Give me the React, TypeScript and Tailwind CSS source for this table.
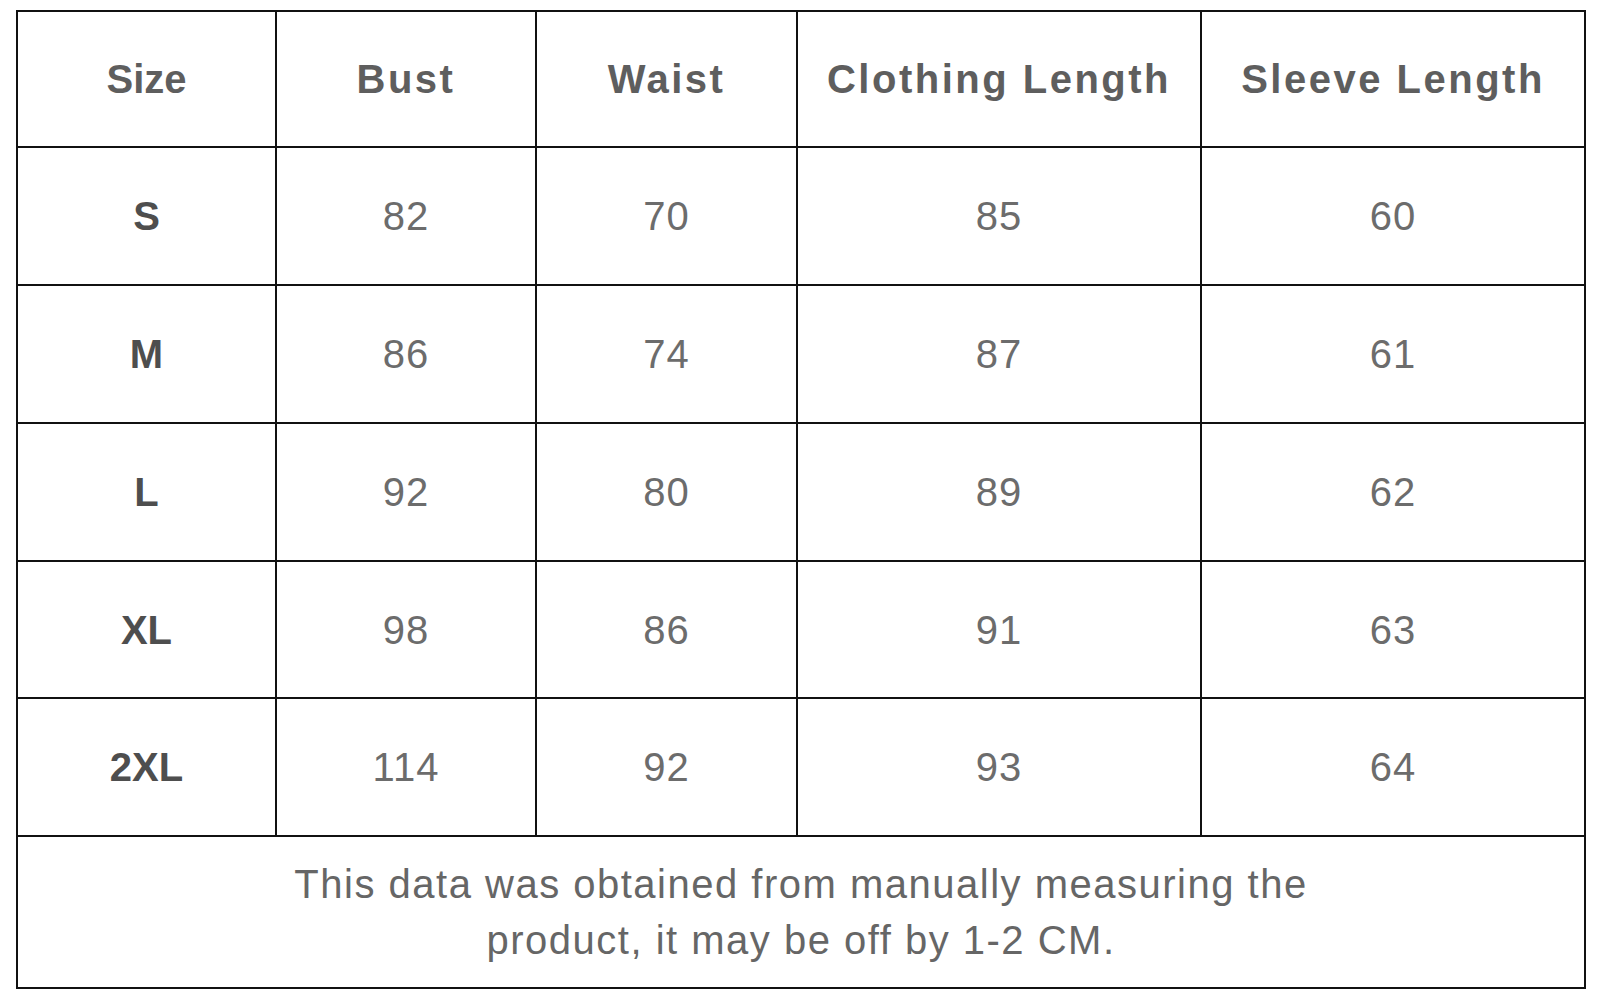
import React from "react";

const headers = ["Size", "Bust", "Waist", "Clothing Length", "Sleeve Length"];
const rows: [string, string, string, string, string][] = [
  ["S", "82", "70", "85", "60"],
  ["M", "86", "74", "87", "61"],
  ["L", "92", "80", "89", "62"],
  ["XL", "98", "86", "91", "63"],
  ["2XL", "114", "92", "93", "64"],
];

export default function App() {
  return (
    <div
      className="min-h-screen w-full bg-white pl-[16px] pt-[10px]"
      style={{ fontFamily: '"Liberation Sans", Arial, sans-serif' }}
    >
      <div className="grid w-[1570px] grid-cols-[257px_258px_259px_402px_382px] grid-rows-[134px_136px_136px_136px_135px_136px_150px] gap-[2px] bg-[#111111] p-[2px]">
        {headers.map((h, i) => (
          <div
            key={h}
            className={
              "flex items-center justify-center bg-white text-[40px] font-bold text-[#5e5e5e] " +
              (i === 0 ? "tracking-[0px]" : "tracking-[2.5px]")
            }
          >
            {h}
          </div>
        ))}
        {rows.map((r) =>
          r.map((c, j) => (
            <div
              key={r[0] + j}
              className={
                j === 0
                  ? "flex items-center justify-center bg-white text-[40px] font-bold text-[#4e4e4e]"
                  : "flex items-center justify-center bg-white text-[40px] tracking-[1px] text-[#6c6c6c]"
              }
            >
              {c}
            </div>
          ))
        )}
        <div className="col-span-5 flex items-center justify-center bg-white">
          <p className="text-center text-[40px] leading-[56px] tracking-[1.5px] text-[#666666]">
            This data was obtained from manually measuring the
            <br />
            product, it may be off by 1-2 CM.
          </p>
        </div>
      </div>
    </div>
  );
}
